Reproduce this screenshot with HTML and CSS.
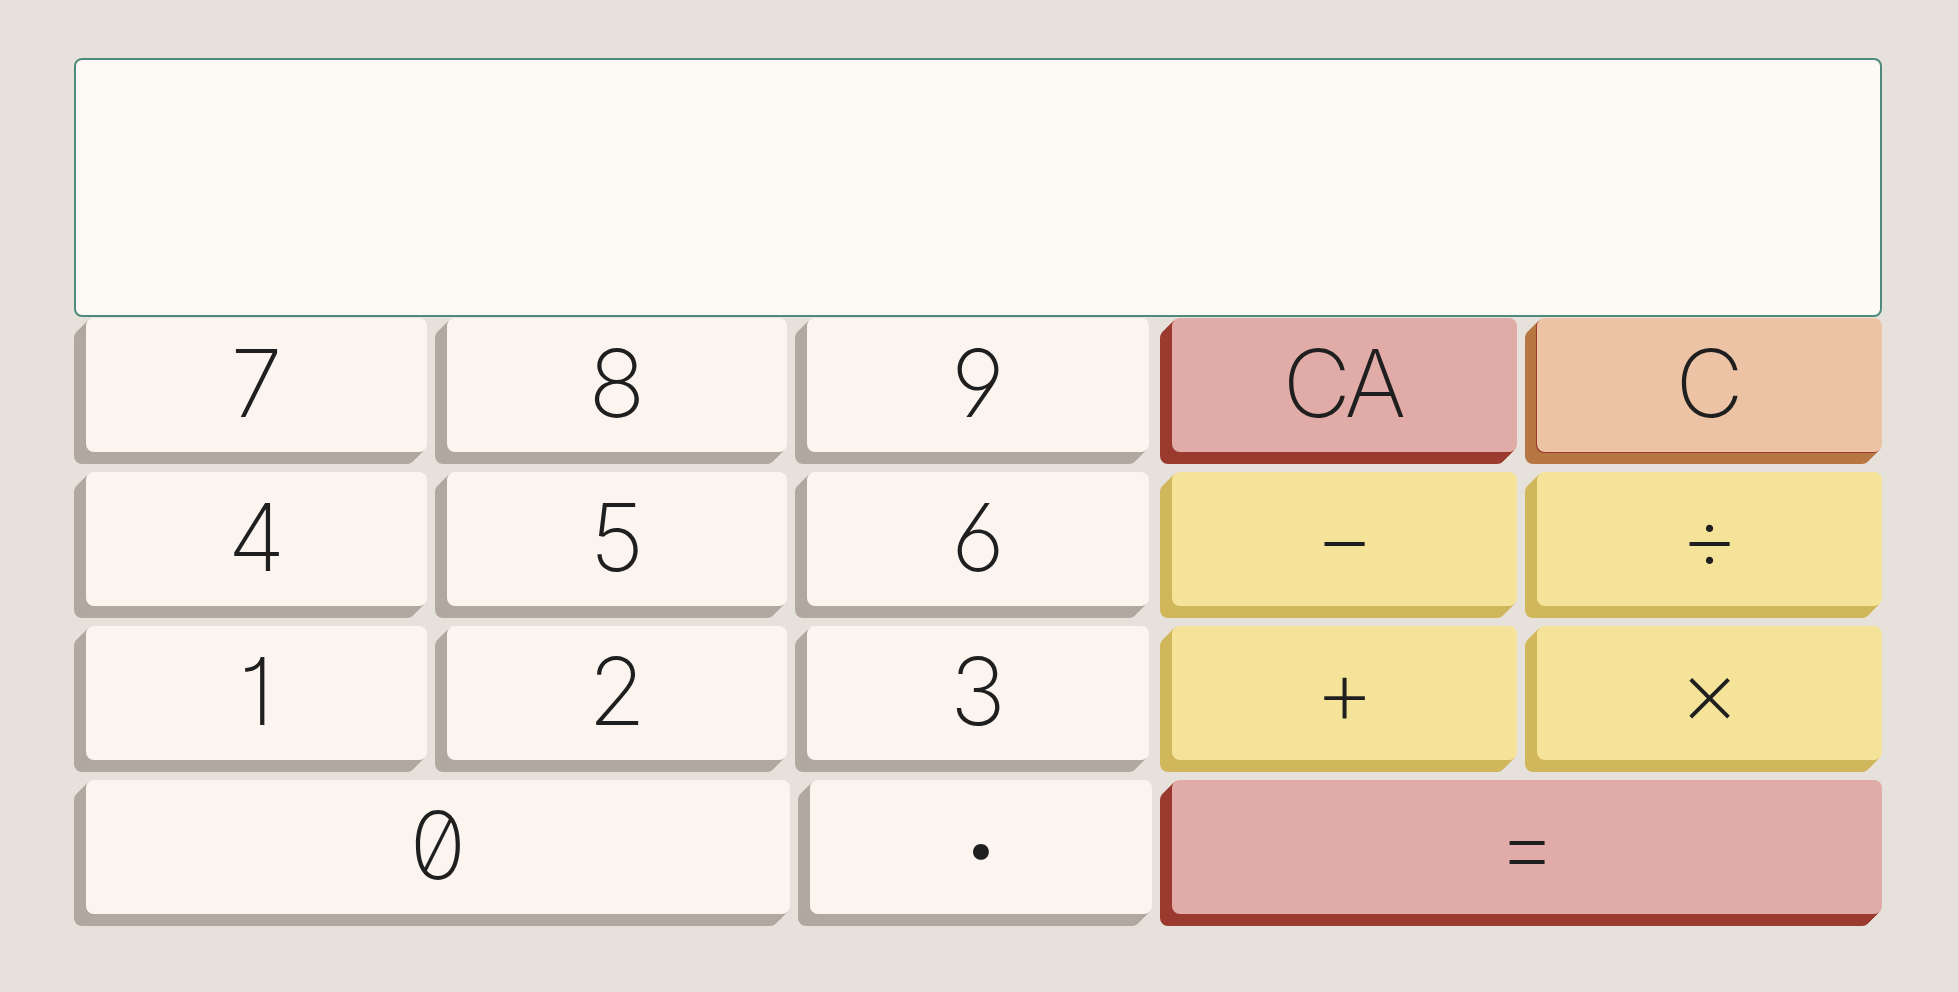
FILE: index.html
```html
<!DOCTYPE html>
<html lang="en">
<head>
<meta charset="utf-8">
<title>Calculator</title>
<link rel="stylesheet" href="styles.css">
</head>
<body>
<div class="calc">
  <div class="display"></div>
  <div class="keys">
    <div class="row">
      <button class="key num">7</button>
      <button class="key num">8</button>
      <button class="key num">9</button>
      <button class="key red shift tight">CA</button>
      <button class="key orange">C</button>
    </div>
    <div class="row">
      <button class="key num">4</button>
      <button class="key num">5</button>
      <button class="key num">6</button>
      <button class="key yellow shift">−</button>
      <button class="key yellow">÷</button>
    </div>
    <div class="row">
      <button class="key num">1</button>
      <button class="key num">2</button>
      <button class="key num">3</button>
      <button class="key yellow shift">+</button>
      <button class="key yellow">×</button>
    </div>
    <div class="row last">
      <button class="key num">0</button>
      <button class="key num dot">·</button>
      <button class="key red">=</button>
    </div>
  </div>
</div>
</body>
</html>
```

FILE: styles.css
```css
html, body {
  margin: 0;
  padding: 0;
  background: #e7e1db;
}

body {
  width: 1958px;
  height: 992px;
  overflow: hidden;
}

.calc {
  padding: 58px 76px 0 74px;
  display: flex;
  flex-direction: column;
}

.display {
  height: 255px;
  background: #fdfaf5;
  border: 2px solid #4e8a79;
  border-radius: 8px;
}

.keys {
  margin-top: 1px;
  padding-left: 12px;
  display: flex;
  flex-direction: column;
  gap: 20px;
}

.row {
  display: grid;
  grid-template-columns: 341px 340px 342px 348px 345px;
  column-gap: 20px;
}

.row.last {
  grid-template-columns: 704px 342px 710px;
}

.key {
  --s: #b1a89f;
  --s1: var(--s);
  height: 134px;
  margin: 0;
  padding: 0 0 4px 0;
  border: 0;
  border-radius: 8px;
  background: #fcf5ef;
  color: #1f1f1f;
  font-family: Inter, "Liberation Sans", sans-serif;
  font-weight: 200;
  font-size: 94px;
  line-height: 1;
  font-feature-settings: "zero" 1, "cv01" 1, "cv03" 1, "cv04" 1;
  display: flex;
  align-items: center;
  justify-content: center;
  box-shadow:
    -1px 1px 0 var(--s1),
    -2px 2px 0 var(--s),
    -3px 3px 0 var(--s),
    -4px 4px 0 var(--s),
    -5px 5px 0 var(--s),
    -6px 6px 0 var(--s),
    -7px 7px 0 var(--s),
    -8px 8px 0 var(--s),
    -9px 9px 0 var(--s),
    -10px 10px 0 var(--s),
    -11px 11px 0 var(--s),
    -12px 12px 0 var(--s);
}

.key.shift {
  margin-left: 3px;
}

.key.tight {
  letter-spacing: -5px;
  text-indent: -5px;
}

.key.red {
  background: #e1aca7;
  --s: #9b3a2f;
}

.key.orange {
  background: #ecc4a5;
  --s: #b77743;
  --s1: #9b3a2f;
}

.key.yellow {
  background: #f5e39a;
  --s: #d1b75b;
}

.key.dot {
  font-weight: 700;
  padding-top: 10px;
}
```
